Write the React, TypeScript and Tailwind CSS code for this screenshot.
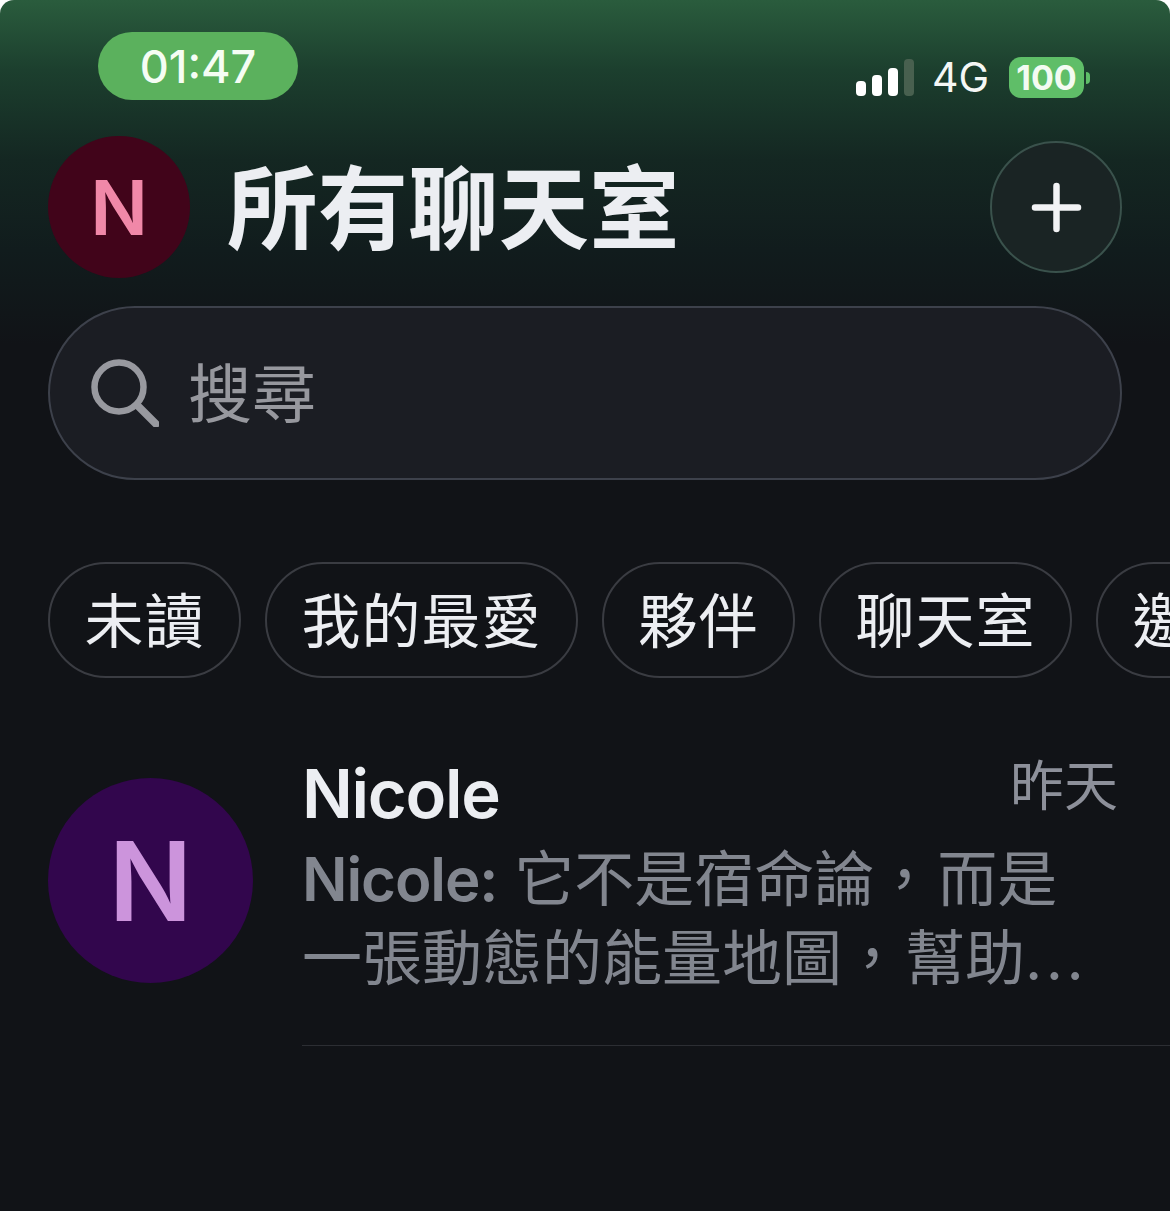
const sans = "font-['Inter','Noto_Sans_CJK_TC',sans-serif]";

function Chip({ label, cut }: { label: string; cut?: boolean }) {
  return (
    <div className={`flex h-[116px] shrink-0 items-center rounded-full border-2 border-[#3a3c42] pl-[34.5px] ${cut ? "pr-[10px]" : "pr-[34.5px]"} pt-[2px] text-[59px] leading-none tracking-[1px] text-[#eceef2]`}>
      {label}
    </div>
  );
}

export default function App() {
  return (
    <div className={`${sans} h-[1211px] w-[1170px] overflow-hidden bg-white`}>
      <div className="h-full w-full overflow-hidden rounded-t-[14px] bg-[#111317] bg-[linear-gradient(180deg,#2a5c3d_0px,#1c3f2e_70px,#142722_160px,#111c1d_250px,#111317_345px)]">
        <div className="flex items-start justify-between pl-[98px] pr-[80px] pt-[32px]">
          <div className="flex h-[68px] w-[200px] items-center justify-center rounded-full bg-[#5bb15d] text-[45px] font-medium leading-none text-[#f5fdf4]">
            01:47
          </div>
          <div className="flex items-center pt-[25px]">
            <div className="flex items-end gap-[6px]">
              <div className="h-[15px] w-[10px] rounded-[4px] bg-white" />
              <div className="h-[21px] w-[10px] rounded-[4px] bg-white" />
              <div className="h-[28px] w-[10px] rounded-[4px] bg-white" />
              <div className="h-[37px] w-[10px] rounded-[4px] bg-[#48604f]" />
            </div>
            <span className="ml-[18px] text-[41px] leading-none text-[#f5f7f5]">4G</span>
            <div className="ml-[20px] flex h-[41px] w-[75px] items-center justify-center rounded-[12px] bg-[#5fbe68] text-[34px] font-bold leading-none text-[#f3fbf2]">
              100
            </div>
            <div className="ml-[2px] h-[12px] w-[4px] rounded-r-[4px] bg-[#5fbe68]" />
          </div>
        </div>

        <div className="mt-[36px] flex items-center pl-[48px] pr-[48px]">
          <div className="flex h-[142px] w-[142px] items-center justify-center rounded-full bg-[#41041a] text-[76px] font-semibold leading-none text-[#f088a8]">
            N
          </div>
          <div className="ml-[37px] pt-[5px] text-[90.5px] font-bold leading-none text-[#eceef2]">所有聊天室</div>
          <div className="ml-auto flex h-[132px] w-[132px] items-center justify-center rounded-full border-2 border-[#3a524c] bg-[#1a2424]">
            <svg width="53" height="53" viewBox="0 0 53 53" fill="none" stroke="#f2f3f5" strokeWidth="6.5" strokeLinecap="round">
              <path d="M26.5 5V48M5 26.5H48" />
            </svg>
          </div>
        </div>

        <div className="mx-[48px] mt-[28px] flex h-[174px] items-center rounded-[87px] border-2 border-[#3d414b] bg-[#1b1d23] pl-[41px]">
          <svg width="68" height="68" viewBox="0 0 68 68" fill="none" stroke="#98999f" strokeWidth="6.5" strokeLinecap="round">
            <circle cx="28" cy="28" r="24.5" />
            <path d="M46 46L65 65" strokeWidth="7.5" />
          </svg>
          <span className="ml-[29px] pt-[2px] text-[64px] leading-none text-[#97989e]">搜尋</span>
        </div>

        <div className="mt-[82px] flex gap-[24px] pl-[48px]">
          <Chip label="未讀" />
          <Chip label="我的最愛" />
          <Chip label="夥伴" />
          <Chip label="聊天室" />
          <Chip label="邀請" cut />
        </div>

        <div className="mt-[100px] flex pl-[48px]">
          <div className="flex h-[205px] w-[205px] shrink-0 items-center justify-center rounded-full bg-[#32064d] text-[110px] font-semibold leading-none text-[#cc94dc]">
            N
          </div>
          <div className="ml-[49px] min-w-0 flex-1">
            <div className="flex items-start justify-between pr-[52px]">
              <span className="mt-[-28px] text-[67px] font-semibold leading-[88px] tracking-[-1.3px] text-[#eceef2]">Nicole</span>
              <span className="mt-[-35px] text-[54px] leading-[88px] text-[#8d909a]">昨天</span>
            </div>
            <div className="mt-[2px] w-[800px] text-[60px] leading-[79px] text-[#82868f]">
              <div className="whitespace-nowrap"><span className="font-semibold tracking-[-1.1px]">Nicole:</span> 它不是宿命論<span className="mr-[3px]">，</span>而是</div>
              <div className="whitespace-nowrap">一張動態的能量地圖<span className="mr-[3px]">，</span>幫助<span className="tracking-[3.5px]">...</span></div>
            </div>
            <div className="mt-[47px] h-[1px] bg-[#2c2e33]" />
          </div>
        </div>
      </div>
    </div>
  );
}
